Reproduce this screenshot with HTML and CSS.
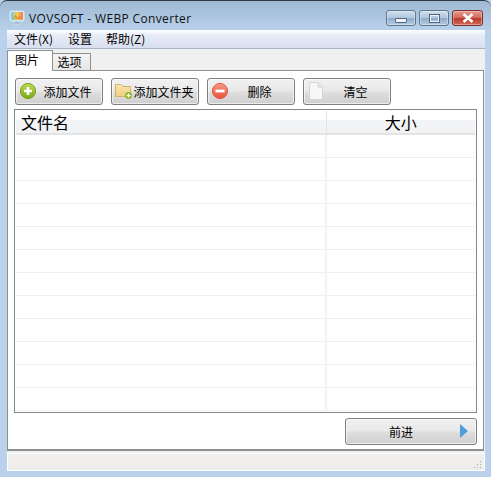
FILE: index.html
```html
<!DOCTYPE html>
<html lang="zh">
<head>
    <meta charset="UTF-8">
    <meta name="viewport" content="width=device-width, initial-scale=1.0">
    <title>VOVSOFT - WEBP Converter</title>
    <link rel="stylesheet" href="styles.css">
</head>

<body>
    <div class="window">
        <!-- Barra del titolo -->
        <div class="titlebar">
            <svg class="app-icon" width="16" height="16" viewBox="0 0 16 16">
                <defs>
                    <linearGradient id="screen" x1="0" y1="0" x2="1" y2="0">
                        <stop offset="0" stop-color="#6fc6e8"/>
                        <stop offset="0.5" stop-color="#f6d04e"/>
                        <stop offset="1" stop-color="#ef7b55"/>
                    </linearGradient>
                    <linearGradient id="green" x1="0" y1="0" x2="0" y2="1">
                        <stop offset="0" stop-color="#c3dc5a"/>
                        <stop offset="1" stop-color="#74a813"/>
                    </linearGradient>
                    <linearGradient id="red" x1="0" y1="0" x2="0" y2="1">
                        <stop offset="0" stop-color="#f69a86"/>
                        <stop offset="1" stop-color="#e8503c"/>
                    </linearGradient>
                    <linearGradient id="folder" x1="0" y1="0" x2="0" y2="1">
                        <stop offset="0" stop-color="#f9e7ae"/>
                        <stop offset="1" stop-color="#efcf7c"/>
                    </linearGradient>
                </defs>
                <rect x="0.5" y="0.5" width="15" height="11" rx="2" fill="#d4e6f1"/>
                <rect x="2" y="2" width="12" height="8" rx="1" fill="url(#screen)"/>
                <path d="M3 9 L6.5 5 L9 7.5 L11 5.5 L13.5 9 Z" fill="#f08a3c"/>
                <path d="M3 9.5 H9 L7 7.5 H4 Z" fill="#9ccf6a"/>
                <rect x="6.5" y="11.5" width="3" height="2.5" fill="#a9bfcc"/>
                <rect x="4.5" y="14" width="7" height="1.5" fill="#c3d3dc"/>
            </svg>
            <span class="title-text">VOVSOFT - WEBP Converter</span>
            <div class="caption-buttons">
                <div class="caption-btn"><span class="glyph-min"></span></div>
                <div class="caption-btn"><span class="glyph-max"></span></div>
                <div class="caption-btn close-btn">
                    <svg width="14" height="10" viewBox="0 0 14 10">
                        <path d="M2.5 1 L11.5 9 M11.5 1 L2.5 9" stroke="#fff" stroke-width="2.6" fill="none"/>
                    </svg>
                </div>
            </div>
        </div>

        <div class="client">
            <div class="menubar">
                <span>文件(X)</span>
                <span>设置</span>
                <span class="menu-help">帮助(Z)</span>
            </div>

            <div class="tabs">
                <div class="tab tab-active">图片</div>
                <div class="tab">选项</div>
            </div>

            <div class="page">
                <div class="toolbar">
                    <button class="btn">
                        <svg class="btn-icon" width="18" height="18" viewBox="0 0 18 18">
                            <circle cx="9" cy="9" r="7.6" fill="url(#green)" stroke="#78a31c"/>
                            <path d="M9 5 V13 M5 9 H13" stroke="#fff" stroke-width="2.6"/>
                        </svg>
                        <span class="btn-label">添加文件</span>
                    </button>
                    <button class="btn">
                        <svg class="btn-icon" width="18" height="18" viewBox="0 0 18 18">
                            <path d="M0.5 2.5 H6 L8 4.5 H15.5 V14.5 H0.5 Z" fill="url(#folder)" stroke="#cdb36c"/>
                            <circle cx="13.5" cy="13.5" r="3.4" fill="#86b81e"/>
                            <path d="M13.5 11.5 V15.5 M11.5 13.5 H15.5" stroke="#fff" stroke-width="1.3"/>
                        </svg>
                        <span class="btn-label folder-label">添加文件夹</span>
                    </button>
                    <button class="btn">
                        <svg class="btn-icon" width="18" height="18" viewBox="0 0 18 18">
                            <circle cx="9" cy="9" r="7.6" fill="url(#red)" stroke="#dc5a47"/>
                            <path d="M4.5 9 H13.5" stroke="#fff" stroke-width="2.8"/>
                        </svg>
                        <span class="btn-label">删除</span>
                    </button>
                    <button class="btn">
                        <svg class="btn-icon" width="18" height="18" viewBox="0 0 18 18">
                            <path d="M2.5 0.5 H11 L15.5 5 V17.5 H2.5 Z" fill="#f7f7f5" stroke="#d6d6d2"/>
                            <path d="M11 0.5 V5 H15.5" fill="#e6e6e2" stroke="#d6d6d2"/>
                        </svg>
                        <span class="btn-label">清空</span>
                    </button>
                </div>

                <div class="file-list">
                    <table>
                        <thead>
                            <tr><th class="col-name">文件名</th><th class="col-size">大小</th></tr>
                        </thead>
                        <tbody>
                            <tr><td></td><td></td></tr>
                            <tr><td></td><td></td></tr>
                            <tr><td></td><td></td></tr>
                            <tr><td></td><td></td></tr>
                            <tr><td></td><td></td></tr>
                            <tr><td></td><td></td></tr>
                            <tr><td></td><td></td></tr>
                            <tr><td></td><td></td></tr>
                            <tr><td></td><td></td></tr>
                            <tr><td></td><td></td></tr>
                            <tr><td></td><td></td></tr>
                            <tr><td></td><td></td></tr>
                        </tbody>
                    </table>
                </div>

                <div class="footer">
                    <button class="btn next-btn">
                        <span class="next-label">前进</span>
                        <svg width="8" height="14" viewBox="0 0 8 14">
                            <path d="M0 0 L8 7 L0 14 Z" fill="#4f9fd8"/>
                        </svg>
                    </button>
                </div>
            </div>

            <div class="statusbar">
                <svg class="grip" width="10" height="10" viewBox="0 0 10 10">
                    <path d="M8 1h1v1H8z M5 4h1v1H5z M8 4h1v1H8z M2 7h1v1H2z M5 7h1v1H5z M8 7h1v1H8z" fill="#a8a8a8"/>
                </svg>
            </div>
        </div>
    </div>
</body>
</html>
```

FILE: styles.css
```css
html, body {
    margin: 0;
    padding: 0;
}

body {
    font-family: "Noto Sans CJK SC", "Liberation Sans", sans-serif;
    font-size: 12px;
    color: #000;
    background: #b9d1ea;
}

.window {
    box-sizing: border-box;
    width: 491px;
    height: 477px;
    display: flex;
    flex-direction: column;
    background: linear-gradient(180deg, #9fb9d4 0, #b9d1ea 30px);
    border-top: 1px solid #2f3a46;
    border-radius: 7px 7px 0 0;
    padding: 0 6px 6px 7px;
}

.titlebar {
    box-sizing: border-box;
    height: 29px;
    flex: none;
    display: flex;
    align-items: center;
    padding-top: 5px;
}

.app-icon {
    margin: 0 4px 0 2px;
}

.title-text {
    font-family: "Open Sans", sans-serif;
    font-size: 12px;
    letter-spacing: 0.35px;
    color: #111;
    margin-top: 1px;
}

.caption-buttons {
    margin: 0 2px 0 auto;
    display: flex;
    gap: 3px;
}

.caption-btn {
    box-sizing: border-box;
    width: 30px;
    height: 16px;
    display: flex;
    align-items: center;
    justify-content: center;
    border: 1px solid #5f7690;
    border-radius: 3px;
    background: linear-gradient(180deg, #cfdeec 0, #b0c7de 50%, #8fabc8 52%, #b4cce2 100%);
    box-shadow: inset 0 0 0 1px rgba(255, 255, 255, 0.35);
}

.glyph-min {
    width: 10px;
    height: 3px;
    margin-top: 5px;
    background: #f0f4f8;
    border: 1px solid #51627a;
    border-radius: 1px;
}

.glyph-max {
    box-sizing: border-box;
    width: 11px;
    height: 9px;
    background: transparent;
    border: 2px solid #f0f4f8;
    outline: 1px solid #51627a;
    outline-offset: -1px;
}

.close-btn {
    width: 31px;
    border-color: #7a2f2a;
    background: linear-gradient(180deg, #e59a8e 0, #d3675a 50%, #b83a2c 52%, #d06a58 100%);
}

.client {
    flex: 1;
    display: flex;
    flex-direction: column;
    min-height: 0;
    background: #f0f0f0;
    width: 478px;
}

.menubar {
    box-sizing: border-box;
    height: 19px;
    flex: none;
    display: flex;
    align-items: center;
    gap: 15px;
    padding: 0 7px;
    line-height: 16px;
    background: linear-gradient(180deg, #fdfeff 0, #e6ebf6 30%, #d8dff0 100%);
    border-bottom: 1px solid #a9b3cb;
}

.menu-help {
    margin-left: -1px;
}

.tabs {
    height: 22px;
    flex: none;
    display: flex;
    align-items: flex-end;
    padding-top: 1px;
    box-sizing: border-box;
    position: relative;
    z-index: 1;
    margin-bottom: -1px;
}

.tab {
    box-sizing: border-box;
    width: 38px;
    height: 18px;
    line-height: 15px;
    padding-right: 4px;
    text-align: center;
    background: linear-gradient(180deg, #f4f4f4, #e6e6e6);
    border: 1px solid #8e8f8f;
    border-left: none;
}

.tab-active {
    width: 46px;
    height: 21px;
    line-height: 17px;
    padding-right: 6px;
    background: #fff;
    border-left: 1px solid #8e8f8f;
    border-bottom: none;
}

.page {
    box-sizing: border-box;
    height: 381px;
    flex: none;
    display: flex;
    flex-direction: column;
    background: #fff;
    border: 1px solid #8e8f8f;
    border-bottom: 2px solid #8e8f8f;
    margin-right: 1px;
    padding: 7px 6px 0;
}

.toolbar {
    display: flex;
    gap: 8px;
    padding-left: 1px;
}

.btn {
    box-sizing: border-box;
    width: 88px;
    height: 27px;
    padding: 0 0 1px 3px;
    display: flex;
    align-items: center;
    font-family: inherit;
    font-size: 12px;
    color: #000;
    border: 1px solid #7f7f7f;
    border-radius: 3px;
    background: linear-gradient(180deg, #f1f1f1 0, #e9e9e9 46%, #dedede 54%, #cfcfcf 100%);
    box-shadow: inset 0 0 0 1px rgba(255, 255, 255, 0.6);
}

.btn-icon {
    flex: none;
}

.btn-label {
    flex: 1;
    text-align: center;
    padding-right: 4px;
    white-space: nowrap;
}

.folder-label {
    padding-right: 2px;
    margin-left: -2px;
}

.file-list {
    box-sizing: border-box;
    height: 304px;
    margin-top: 4px;
    background: #fff;
    border: 1px solid #82868c;
    padding: 1px 1px 0;
    overflow: hidden;
}

table {
    width: 100%;
    table-layout: fixed;
    border-collapse: collapse;
}

th {
    height: 22px;
    padding: 0 0 0 5px;
    font-size: 16px;
    font-weight: 400;
    text-align: left;
    line-height: 20px;
    background: linear-gradient(180deg, #ffffff 0, #ffffff 40%, #f3f4f6 42%, #f1f2f4 100%);
    border-bottom: 2px solid #e3e3e3;
    border-right: 1px solid #e3e3e3;
}

.col-name {
    width: 310px;
    box-sizing: border-box;
}

.col-size {
    text-align: center;
    padding: 0;
    border-right: none;
}

td {
    height: 22px;
    padding: 0;
    border-bottom: 1px solid #f0f0f0;
    border-right: 2px solid #f3f3f3;
}

td:last-child {
    border-right: none;
}

.footer {
    display: flex;
    justify-content: flex-end;
    margin-top: 5px;
}

.next-btn {
    width: 132px;
    padding: 0 8px 1px 0;
}

.next-label {
    flex: 1;
    text-align: center;
    padding-right: 4px;
}

.statusbar {
    flex: 1;
    display: flex;
    align-items: flex-end;
    justify-content: flex-end;
    background: #f0eded;
    border: 1px solid #fff;
    border-top-width: 1px;
    margin-top: 2px;
}

.grip {
    margin: 0 2px 0 0;
}
```
